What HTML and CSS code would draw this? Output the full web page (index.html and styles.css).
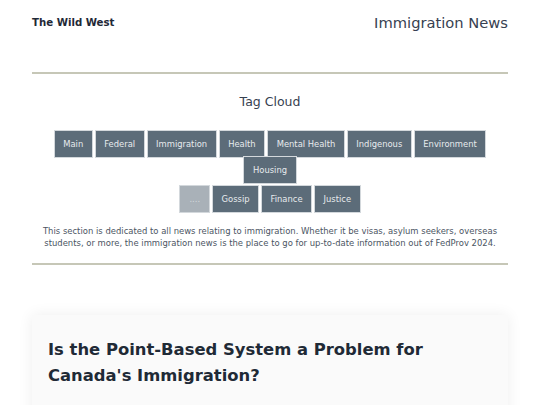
FILE: index.html
```html
<!DOCTYPE html>
<html lang="en">
<head>
<meta charset="utf-8">
<title>Immigration News</title>
<link rel="stylesheet" href="styles.css">
</head>
<body>
<div class="page">
  <header class="header">
    <div class="brand">The Wild West</div>
    <div class="section-name">Immigration News</div>
  </header>
  <div class="rule rule-top"></div>
  <section class="cloud">
    <h2 class="cloud-title">Tag Cloud</h2>
    <div class="tags">
      <a class="tag">Main</a>
      <a class="tag">Federal</a>
      <a class="tag">Immigration</a>
      <a class="tag">Health</a>
      <a class="tag">Mental Health</a>
      <a class="tag">Indigenous</a>
      <a class="tag">Environment</a>
      <a class="tag">Housing</a>
    </div>
    <div class="tags tags-more">
      <a class="tag tag-muted">....</a>
      <a class="tag">Gossip</a>
      <a class="tag">Finance</a>
      <a class="tag">Justice</a>
    </div>
    <p class="cloud-text">This section is dedicated to all news relating to immigration. Whether it be visas, asylum seekers, overseas students, or more, the immigration news is the place to go for up-to-date information out of FedProv 2024.</p>
  </section>
  <div class="rule rule-bottom"></div>
  <article class="card">
    <h1 class="card-title">Is the Point-Based System a Problem for Canada's Immigration?</h1>
  </article>
</div>
</body>
</html>
```
FILE: styles.css
```css
html, body {
  margin: 0;
  padding: 0;
  background: #ffffff;
}
body {
  font-family: "DejaVu Sans", Verdana, sans-serif;
  color: #1f2937;
  overflow: hidden;
}
.page {
  padding: 0 32px;
}
.header {
  display: flex;
  justify-content: space-between;
  align-items: center;
  height: 45px;
}
.brand {
  font-weight: bold;
  font-size: 10.2px;
  color: #1f2937;
  line-height: 12px;
}
.section-name {
  font-size: 14.7px;
  color: #374151;
  line-height: 18px;
}
.rule {
  height: 2px;
  background: #c6c7b7;
}
.rule-top {
  margin-top: 27px;
}
.cloud {
  display: flex;
  flex-direction: column;
  align-items: center;
}
.cloud-title {
  margin: 20px 0 0;
  font-size: 12.5px;
  font-weight: normal;
  line-height: 16px;
  color: #374151;
}
.tags {
  display: flex;
  flex-wrap: wrap;
  justify-content: center;
  margin-top: 20px;
}
.tags-more {
  margin-top: 3px;
}
.tag {
  display: block;
  font-size: 8.4px;
  line-height: 10px;
  padding: 8px 8.5px;
  margin: 0 1px -2px;
  border: 1px solid #d3d8dc;
  background: #5c6c79;
  color: #e8ebee;
  white-space: nowrap;
}
.tag-muted {
  background: #a9b1b8;
  color: #d4d9dd;
  padding: 8px 9px;
}
.cloud-text {
  margin: 14px 0 0;
  font-size: 8.45px;
  line-height: 12px;
  text-align: center;
  color: #4b5563;
}
.rule-bottom {
  margin-top: 14px;
}
.card {
  margin-top: 50px;
  background: #fafafa;
  box-shadow: 0 0 14px rgba(0, 0, 0, 0.07);
  padding: 22px 16px 30px;
}
.card-title {
  margin: 0;
  font-size: 16.4px;
  line-height: 26px;
  font-weight: bold;
  color: #1f2a36;
  max-width: 400px;
}
```
